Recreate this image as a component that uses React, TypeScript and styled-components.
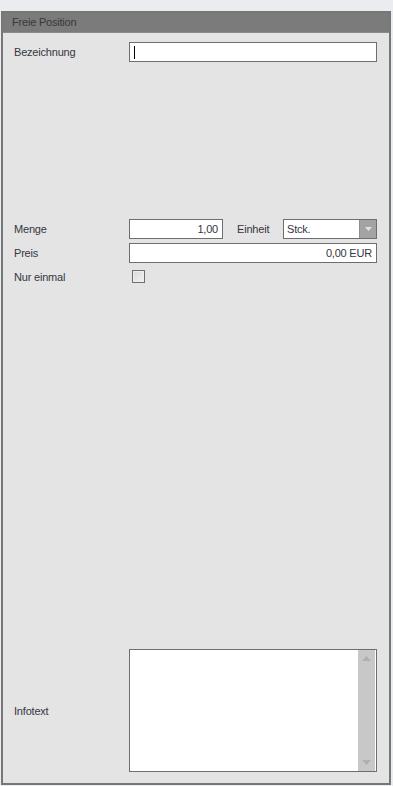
import React from 'react'
import styled, { createGlobalStyle } from 'styled-components'

const GlobalStyle = createGlobalStyle`
  html, body {
    margin: 0;
    padding: 0;
    background: #ebecef;
  }
  body {
    font-family: "Liberation Sans", Arial, sans-serif;
  }
`

const Page = styled.div`
  width: 393px;
  height: 786px;
  box-sizing: border-box;
  padding: 11px 2px 1px 1px;
  display: flex;
`

const Panel = styled.div`
  flex: 1;
  display: flex;
  flex-direction: column;
  border: 2px solid #777777;
  background: #e4e4e4;
`

const Header = styled.div`
  height: 19px;
  background: #7b7b7b;
  color: #383838;
  font-family: "Liberation Sans", Arial, sans-serif;
  font-size: 11px;
  letter-spacing: -0.2px;
  line-height: 19px;
  padding-left: 9px;
  border-bottom: 1px solid #8a8a8a;
`

const Body = styled.div`
  flex: 1;
  display: flex;
  flex-direction: column;
  padding: 9px 12px 11px 11px;
`

const Row = styled.div<{ mt?: number }>`
  display: flex;
  align-items: center;
  margin-top: ${(p) => p.mt ?? 0}px;
`

const Label = styled.label<{ w?: number; pl?: number }>`
  width: ${(p) => p.w ?? 115}px;
  padding-left: ${(p) => p.pl ?? 0}px;
  flex: none;
  font-family: "Liberation Sans", Arial, sans-serif;
  font-size: 11px;
  letter-spacing: -0.2px;
  color: #36363f;
`

const Field = styled.div<{ w?: number; align?: string }>`
  box-sizing: border-box;
  height: 20px;
  ${(p) => (p.w ? `width: ${p.w}px; flex: none;` : 'flex: 1;')}
  border: 1px solid #6e6e6e;
  background: #ffffff;
  display: flex;
  align-items: center;
  justify-content: ${(p) => (p.align === 'right' ? 'flex-end' : 'flex-start')};
  padding: 0 4px;
  font-family: "Liberation Sans", Arial, sans-serif;
  font-size: 11px;
  letter-spacing: -0.2px;
  color: #36363f;
`

const Caret = styled.span`
  width: 1px;
  height: 13px;
  background: #000000;
`

const Select = styled.div`
  box-sizing: border-box;
  flex: 1;
  height: 20px;
  border: 1px solid #6e6e6e;
  background: #ffffff;
  display: flex;
  font-family: "Liberation Sans", Arial, sans-serif;
  font-size: 11px;
  letter-spacing: -0.2px;
  color: #36363f;
`

const SelectValue = styled.div`
  flex: 1;
  display: flex;
  align-items: center;
  padding-left: 3px;
`

const SelectButton = styled.div`
  width: 16px;
  background: #a3a3a3;
  border-left: 1px solid #8e8e8e;
  display: flex;
  align-items: center;
  justify-content: center;
`

const Check = styled.div`
  box-sizing: border-box;
  width: 13px;
  height: 13px;
  margin-left: 3px;
  border: 1px solid #6e6e6e;
  background: linear-gradient(135deg, #d8d8d8, #f4f4f4);
  box-shadow: inset 0 0 0 1px #eeeeee;
`

const Spacer = styled.div`
  flex: 1;
`

const TextArea = styled.div`
  box-sizing: border-box;
  flex: 1;
  height: 123px;
  border: 1px solid #6e6e6e;
  background: #ffffff;
  display: flex;
  justify-content: flex-end;
`

const ScrollBar = styled.div`
  width: 17px;
  background: #c8c8c8;
  display: flex;
  flex-direction: column;
  justify-content: space-between;
  align-items: center;
  padding: 6px 0;
  margin-right: 1px;
`

const Arrow = ({ up, color, w = 9, h = 5 }: { up?: boolean; color: string; w?: number; h?: number }) => (
  <svg width={w} height={h} viewBox={`0 0 ${w} ${h}`}>
    <path d={up ? `M0 ${h} L${w / 2} 0 L${w} ${h} Z` : `M0 0 L${w / 2} ${h} L${w} 0 Z`} fill={color} />
  </svg>
)

export default function App() {
  return (
    <>
      <GlobalStyle />
      <Page>
        <Panel>
          <Header>Freie Position</Header>
          <Body>
            <Row>
              <Label>Bezeichnung</Label>
              <Field>
                <Caret />
              </Field>
            </Row>

            <Row mt={157}>
              <Label>Menge</Label>
              <Field w={94} align="right">1,00</Field>
              <Label w={46} pl={14}>Einheit</Label>
              <Select>
                <SelectValue>Stck.</SelectValue>
                <SelectButton>
                  <Arrow color="#e2e2e2" w={7} h={4} />
                </SelectButton>
              </Select>
            </Row>

            <Row mt={4}>
              <Label>Preis</Label>
              <Field align="right">0,00 EUR</Field>
            </Row>

            <Row mt={7}>
              <Label>Nur einmal</Label>
              <Check />
            </Row>

            <Spacer />

            <Row>
              <Label>Infotext</Label>
              <TextArea>
                <ScrollBar>
                  <Arrow up color="#b0b0b0" />
                  <Arrow color="#b0b0b0" />
                </ScrollBar>
              </TextArea>
            </Row>
          </Body>
        </Panel>
      </Page>
    </>
  )
}
